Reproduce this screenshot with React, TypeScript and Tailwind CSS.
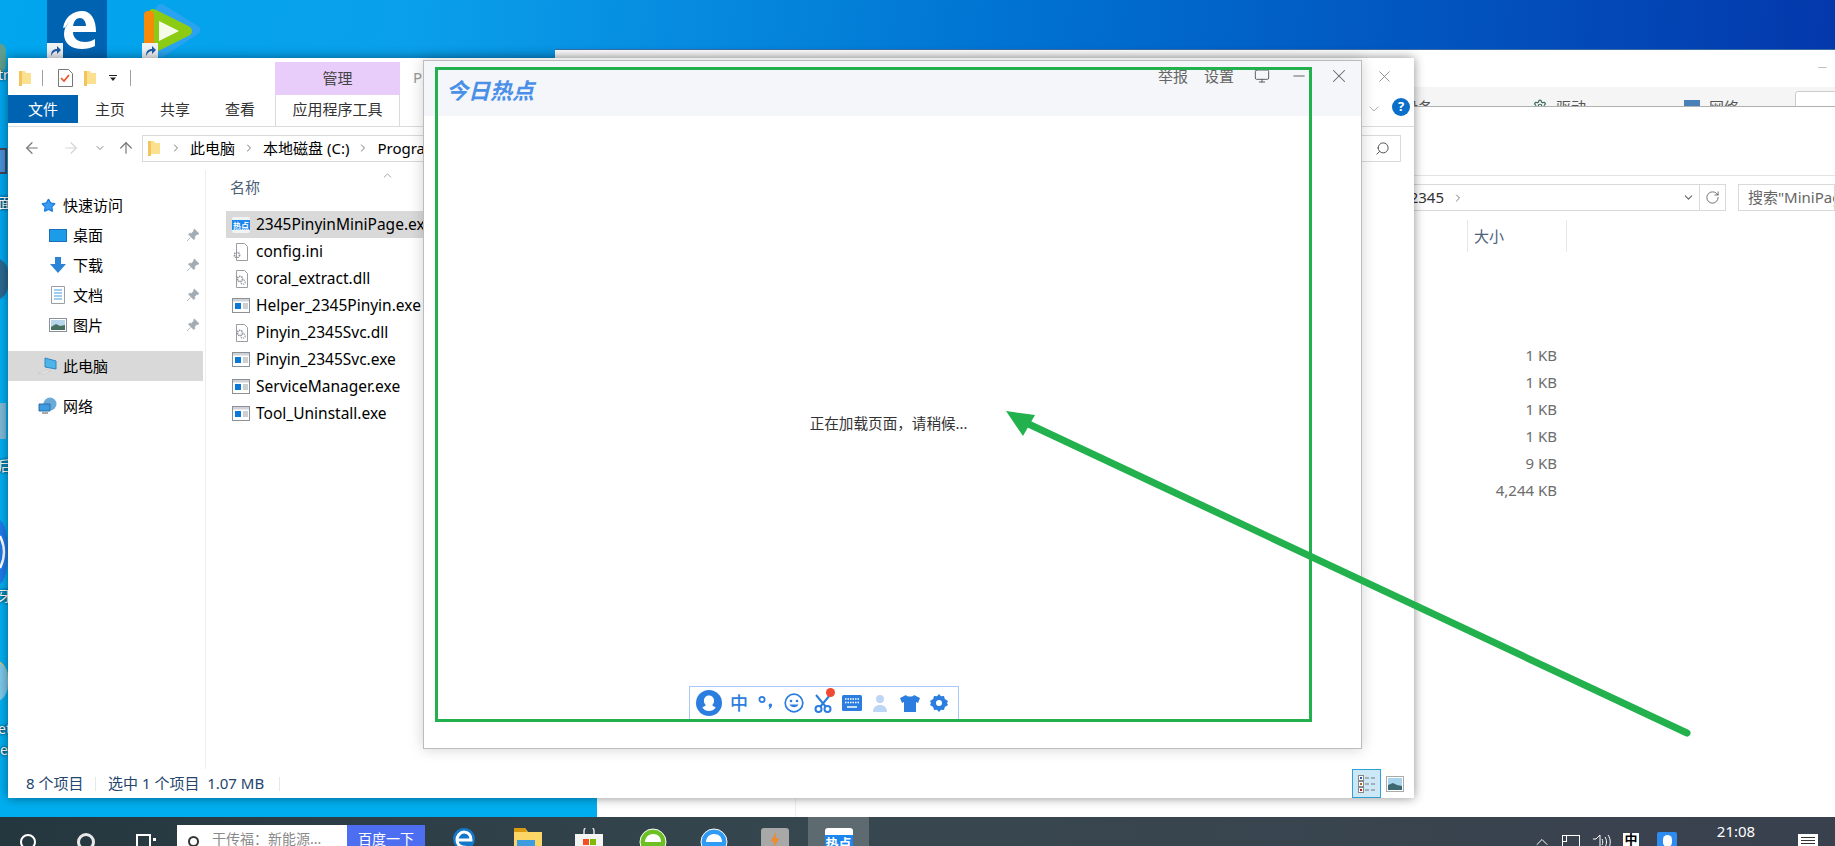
import { ArrowLeft, ArrowRight, ArrowUp, ChevronDown, ChevronRight, ChevronUp, Minus, Monitor, RotateCw, Search, Settings, Star, X } from 'lucide-react';

const FONT = "font-['Noto_Sans','Noto_Sans_CJK_SC',sans-serif]";

const FolderIcon = ({ className = '' }: { className?: string }) => (
    <svg viewBox="0 0 12 17" className={`w-[12px] h-[17px] shrink-0 ${className}`}>
        <path d="M0 1h6l1 2h5v11H2l-2 2z" fill="#fbe08f" />
        <path d="M0 1h3v15H0z" fill="#f2c55c" />
    </svg>
);

const ExeIcon = () => (
    <svg viewBox="0 0 18 15" className="w-[18px] h-[15px] shrink-0">
        <rect x="0.5" y="0.5" width="17" height="14" fill="#fff" stroke="#8b9097" />
        <rect x="1" y="1" width="16" height="2.5" fill="#cfd3d8" />
        <rect x="3" y="5" width="6" height="6" fill="#0a78d7" />
        <path d="M11 6h5M11 8h5M11 10h5" stroke="#9aa0a6" />
    </svg>
);

const PageIcon = ({ gear = false }: { gear?: boolean }) => (
    <svg viewBox="0 0 18 18" className="w-[18px] h-[18px] shrink-0">
        <path d="M4.5.5h8l3 3v14h-11z" fill="#fff" stroke="#9a9ea3" />
        <circle cx={gear ? 5 : 8} cy={gear ? 12 : 9} r="2.6" fill="none" stroke="#8a8f95" strokeWidth="1.6" strokeDasharray="1.4 .8" />
        {!gear && <circle cx="11" cy="12" r="2.2" fill="none" stroke="#a5a9ae" strokeWidth="1.4" strokeDasharray="1.2 .8" />}
    </svg>
);

const HotIcon = () => (
    <svg viewBox="0 0 18 16" className="w-[18px] h-[16px] shrink-0">
        <rect width="18" height="16" rx="2" fill="#f1f3f5" />
        <rect y="3" width="18" height="10" fill="#1a86ee" />
        <text x="9" y="11.5" textAnchor="middle" fontSize="8" fontWeight="700" fill="#fff" fontFamily="Noto Sans CJK SC">热点</text>
    </svg>
);

const Pin = () => (
    <svg viewBox="0 0 14 14" className="w-[14px] h-[14px] shrink-0">
        <path d="M8.3 1 13 5.7l-1.3.7-.7-.2L8.6 8.6l.2 2-1 1L2.5 6.2l1-1 2 .2 2.4-2.4-.2-.7z M4.5 9.4 1 13" fill="#a3abb3" stroke="#a3abb3" strokeWidth="0.8" />
    </svg>
);

const NavItem = ({ icon, label, pinned, active, indent }: { icon: React.ReactNode; label: string; pinned?: boolean; active?: boolean; indent?: boolean }) => (
    <div className={`flex items-center h-[30px] w-[195px] text-[15px] text-black ${active ? 'bg-[#d9d9d9]' : ''}`}>
        <div className={`flex items-center justify-center w-[20px] ${indent ? 'ml-[40px]' : 'ml-[30px]'}`}>{icon}</div>
        <span className="ml-[5px]">{label}</span>
        {pinned && <span className="ml-auto mr-[3px]"><Pin /></span>}
    </div>
);

const files: { name: string; icon: React.ReactNode; selected?: boolean }[] = [
    { name: '2345PinyinMiniPage.exe', icon: <HotIcon />, selected: true },
    { name: 'config.ini', icon: <PageIcon gear /> },
    { name: 'coral_extract.dll', icon: <PageIcon /> },
    { name: 'Helper_2345Pinyin.exe', icon: <ExeIcon /> },
    { name: 'Pinyin_2345Svc.dll', icon: <PageIcon /> },
    { name: 'Pinyin_2345Svc.exe', icon: <ExeIcon /> },
    { name: 'ServiceManager.exe', icon: <ExeIcon /> },
    { name: 'Tool_Uninstall.exe', icon: <ExeIcon /> },
];

const sizes = ['1 KB', '1 KB', '1 KB', '1 KB', '9 KB', '4,244 KB'];

function Explorer() {
    return (
        <div className="absolute left-[8px] top-[58px] w-[1406px] h-[740px] bg-white flex flex-col shadow-[0_0_10px_rgba(0,0,0,0.45)]">
            {/* title row */}
            <div className="flex h-[37px] shrink-0">
                <div className="flex items-center h-[37px] pt-[3px] pl-[11px]">
                    <FolderIcon />
                    <div className="w-px h-[16px] bg-[#a0a0a0] ml-[11px]" />
                    <svg viewBox="0 0 15 18" className="w-[15px] h-[18px] ml-[15px]">
                        <path d="M.5.5h10l4 4v13H.5z" fill="#fff" stroke="#777" />
                        <path d="M3 9l3 3 5-6" fill="none" stroke="#e8501e" strokeWidth="1.6" />
                    </svg>
                    <FolderIcon className="ml-[11px]" />
                    <svg viewBox="0 0 8 6" className="w-[8px] h-[6px] ml-[13px]"><path d="M0 0h8v1H0zM1 2.5h6L4 6z" fill="#222" /></svg>
                    <div className="w-px h-[16px] bg-[#a0a0a0] ml-[13px]" />
                </div>
                <div className="ml-[144px] mt-[4px] w-[125px] h-[33px] bg-[#e8ccfa] flex items-center justify-center text-[15px] text-[#444]">管理</div>
                <span className="ml-[13px] mt-[8px] text-[15px] text-[#999]">P</span>
                <X className="ml-auto mr-[20px] mt-[9px] text-[#777]" size={19} strokeWidth={1} />
            </div>
            {/* ribbon tabs */}
            <div className="flex h-[32px] shrink-0 border-b border-[#dadbdc] text-[15px] text-[#333]">
                <div className="w-[70px] h-[28px] bg-[#0063b1] text-white flex items-center justify-center">文件</div>
                <div className="flex h-[28px] items-center">
                    <span className="ml-[17px]">主页</span>
                    <span className="ml-[35px]">共享</span>
                    <span className="ml-[35px]">查看</span>
                </div>
                <div className="ml-[20px] w-[125px] h-[31px] pb-[3px] border-x border-[#dadbdc] flex items-center justify-center whitespace-nowrap">应用程序工具</div>
                <ChevronDown className="ml-auto mt-[6px] text-[#888]" size={16} strokeWidth={1} />
                <div className="ml-[10px] mr-[4px] mt-[3px] w-[18px] h-[18px] rounded-full bg-[#0a6fc9] text-white text-[13px] font-bold flex items-center justify-center">?</div>
            </div>
            {/* nav row */}
            <div className="flex items-center h-[43px] shrink-0 pb-[1px] pl-[15px] pr-[13px]">
                <ArrowLeft size={18} strokeWidth={1.6} className="text-[#777]" />
                <ArrowRight size={18} strokeWidth={1.6} className="ml-[21px] text-[#d5d5d5]" />
                <ChevronDown size={12} strokeWidth={2} className="ml-[14px] text-[#888]" />
                <ArrowUp size={18} strokeWidth={1.6} className="ml-[11px] text-[#777]" />
                <div className="flex items-center ml-[7px] w-[900px] h-[27px] border border-[#d9d9d9] text-[15px] text-black whitespace-nowrap overflow-hidden">
                    <FolderIcon className="ml-[5px]" />
                    <ChevronRight size={12} className="ml-[10px] text-[#777]" />
                    <span className="ml-[8px]">此电脑</span>
                    <ChevronRight size={12} className="ml-[8px] text-[#777]" />
                    <span className="ml-[8px]">本地磁盘 (C:)</span>
                    <ChevronRight size={12} className="ml-[8px] text-[#777]" />
                    <span className="ml-[8px]">Program Files (x86)</span>
                </div>
                <div className="flex items-center justify-end ml-auto w-[200px] h-[27px] border border-[#d9d9d9] pr-[10px]">
                    <Search size={15} strokeWidth={1.6} className="text-[#555] -scale-x-100" />
                </div>
            </div>
            {/* body */}
            <div className="flex flex-1 min-h-0">
                <div className="w-[198px] shrink-0 border-r border-[#eeeeee] pt-[20px]">
                    <NavItem icon={<Star size={15} className="text-[#1b7fe0] fill-[#3a9bf0]" />} label="快速访问" />
                    <NavItem indent pinned icon={<div className="w-[18px] h-[13px] bg-[#1c9be8] border border-[#1a6fb8]" />} label="桌面" />
                    <NavItem indent pinned icon={<svg viewBox="0 0 16 16" className="w-[16px] h-[16px]"><path d="M5 0h6v7h5l-8 9-8-9h5z" fill="#2b83d8" /></svg>} label="下载" />
                    <NavItem indent pinned icon={<svg viewBox="0 0 14 18" className="w-[14px] h-[18px]"><path d="M.5.5h13v17H.5z" fill="#fff" stroke="#9aa0a6" /><path d="M3 4h8M3 7h8M3 10h8M3 13h8" stroke="#3f9be0" /></svg>} label="文档" />
                    <NavItem indent pinned icon={<svg viewBox="0 0 18 14" className="w-[18px] h-[14px]"><rect x=".5" y=".5" width="17" height="13" fill="#fff" stroke="#8b9097" /><rect x="2" y="2" width="14" height="10" fill="#b7d6ea" /><path d="M2 9l5-3 4 2 5-1v5H2z" fill="#47705e" /></svg>} label="图片" />
                    <div className="h-[11px]" />
                    <NavItem active icon={<svg viewBox="0 0 20 18" className="w-[20px] h-[18px]"><path d="M7 1l11 3v8L7 10z" fill="#4db4ea" stroke="#2e86c0" /><path d="M0 16l10-3 3 1-8 3z" fill="#e6e6e6" stroke="#c0c0c0" strokeWidth=".5" /></svg>} label="此电脑" />
                    <div className="h-[10px]" />
                    <NavItem icon={<svg viewBox="0 0 20 18" className="w-[20px] h-[18px]"><circle cx="12" cy="7" r="6.5" fill="#6aa9d8" /><path d="M1 7h11v7H1z" fill="#3d9be0" stroke="#2d6fa8" /><path d="M4 16h6" stroke="#555" /></svg>} label="网络" />
                </div>
                <div className="flex-1 text-[15.5px] text-black">
                    <div className="flex items-start h-[41px] pl-[24px] pt-[6px] text-[15px] text-[#4c607a]">
                        <span>名称</span>
                        <ChevronUp size={13} strokeWidth={1.2} className="ml-[121px] -mt-[7px] text-[#777]" />
                    </div>
                    {files.map((f) => (
                        <div key={f.name} className={`flex items-center w-[1000px] h-[27px] ml-[20px] pl-[6px] ${f.selected ? 'bg-[#d9d9d9]' : ''}`}>
                            <div className="w-[18px] flex justify-center">{f.icon}</div>
                            <span className="ml-[6px]">{f.name}</span>
                        </div>
                    ))}
                </div>
            </div>
            {/* status bar */}
            <div className="flex items-center h-[29px] shrink-0 text-[15px] text-[#24456e]">
                <span className="ml-[18px] w-[69px] whitespace-nowrap">8 个项目</span>
                <div className="w-px h-[14px] bg-[#e8e8e8]" />
                <span className="ml-[12px] w-[171px] whitespace-nowrap">选中 1 个项目&nbsp; 1.07 MB</span>
                <div className="w-px h-[14px] bg-[#e8e8e8]" />
                <div className="ml-auto flex items-center justify-center w-[29px] h-[29px] bg-[#cce8f6] border border-[#2f9fd8]">
                    <svg viewBox="0 0 18 18" className="w-[18px] h-[18px]">
                        <rect x=".5" y=".5" width="5" height="5" fill="#fff" stroke="#888" /><rect x=".5" y="6.5" width="5" height="5" fill="#fff" stroke="#888" /><rect x=".5" y="12.5" width="5" height="5" fill="#fff" stroke="#888" />
                        <rect x="2" y="2" width="2" height="2" fill="#2a5aa8" /><rect x="2" y="8" width="2" height="2" fill="#a5702a" /><rect x="2" y="14" width="2" height="2" fill="#b82020" />
                        <path d="M7 3h4M13 3h4M7 9h4M13 9h4M7 15h4M13 15h4" stroke="#777" />
                    </svg>
                </div>
                <svg viewBox="0 0 18 16" className="w-[18px] h-[16px] ml-[5px] mr-[10px]"><rect x=".5" y=".5" width="17" height="15" fill="#fff" stroke="#aaa" /><rect x="2" y="2" width="14" height="12" fill="#a8d4ee" /><path d="M2 9l5-2 4 2 5 1v4H2z" fill="#3d6a70" /></svg>
            </div>
        </div>
    );
}

function BackWindow() {
    return (
        <>
            {/* lower window, only its bottom strip shows */}
            <div className="absolute left-[597px] top-[400px] w-[1238px] h-[417px] bg-white flex items-end">
                <div className="ml-[198px] w-px h-[19px] bg-[#eeeeee]" />
            </div>
            <div className="absolute left-[555px] top-[49px] w-[1280px] h-[749px] bg-white flex flex-col border-t border-[#3a6ea8]">
                <div className="flex justify-end h-[37px] shrink-0">
                    <Minus size={13} strokeWidth={1} className="mr-[6px] mt-[11px] text-[#888]" />
                </div>
                <div className="flex h-[20px] shrink-0 overflow-hidden bg-[#f5f5f5] border-b border-[#b0b0b0] pl-[848px] text-[15px] text-[#555] whitespace-nowrap">
                    <span className="pt-[9px]">设备</span>
                    <Settings size={14} className="ml-[100px] mt-[12px] shrink-0 text-[#3d6a5a]" />
                    <span className="ml-[9px] pt-[9px]">驱动</span>
                    <div className="ml-[98px] mt-[13px] w-[16px] h-[12px] bg-[#4a7fb8] shrink-0" />
                    <span className="ml-[9px] pt-[9px]">网络</span>
                    <div className="ml-[56px] mt-[4px] w-[60px] h-[20px] bg-white border border-[#cccccc] rounded-t-[3px] shrink-0" />
                </div>
                <div className="h-[69px] shrink-0 border-b border-[#e3e3e3]" />
                <div className="flex items-center h-[27px] mt-[8px] shrink-0 text-[15px] text-[#333]">
                    <div className="flex items-center justify-end ml-[700px] w-[471px] h-[27px] border border-[#d9d9d9]">
                        <span>2345</span>
                        <ChevronRight size={12} className="ml-[8px] mr-[218px] text-[#777]" />
                        <ChevronDown size={13} strokeWidth={2} className="mr-[4px] text-[#666]" />
                        <div className="w-px h-[25px] bg-[#d9d9d9]" />
                        <RotateCw size={15} strokeWidth={1.5} className="mx-[5px] text-[#666]" />
                    </div>
                    <div className="flex items-center ml-[12px] flex-1 h-[27px] border border-[#d9d9d9] pl-[9px] text-[#666] whitespace-nowrap overflow-hidden">搜索"MiniPage"</div>
                </div>
                <div className="flex items-center h-[32px] mt-[9px] shrink-0 ml-[912px] w-[100px] border-x border-[#e8e8e8] pl-[6px] text-[15px] text-[#4c607a]">大小</div>
                <div className="mt-[90px] w-[1002px] text-right text-[15px] text-[#6d6d6d]">
                    {sizes.map((s, i) => (
                        <div key={i} className="h-[27px] leading-[27px]">{s}</div>
                    ))}
                </div>
            </div>
        </>
    );
}

function Toolbar() {
    const c = '#2b7de0';
    return (
        <div className="relative flex items-center w-[270px] h-[34px] bg-white border border-[#a8c8f8] pl-[6px] gap-[8px]">
            <svg viewBox="0 0 26 26" className="w-[26px] h-[26px] shrink-0">
                <circle cx="13" cy="13" r="13" fill={c} />
                <path d="M13 5.5c3.4 0 5.2 2.6 5 5.7-.1 1.6-.8 2.9-1.7 3.8.2 1 1.8 1.6 3.4 2.4-1.6 2.3-4 3.6-6.7 3.6s-5.1-1.3-6.7-3.6c1.6-.8 3.2-1.4 3.4-2.4-.9-.9-1.6-2.2-1.7-3.8-.2-3.1 1.6-5.7 5-5.7z" fill="#fff" />
            </svg>
            <span className="w-[17px] shrink-0 text-[18px] leading-none font-medium text-[#2b7de0]">中</span>
            <svg viewBox="0 0 18 18" className="w-[18px] h-[18px] ml-[2px] shrink-0">
                <circle cx="5" cy="5.5" r="2.6" fill="none" stroke={c} strokeWidth="1.8" />
                <path d="M13.5 9.5c1.6 0 2 1.8 1 3.5-.6 1-1.5 2-3 2.7.6-1 1-1.8 1-2.8-1.5-.8-.8-3.4 1-3.4z" fill={c} />
            </svg>
            <svg viewBox="0 0 20 20" className="w-[20px] h-[20px] ml-[1px] shrink-0">
                <circle cx="10" cy="10" r="8.8" fill="none" stroke={c} strokeWidth="1.7" />
                <circle cx="7" cy="8" r="1.3" fill={c} /><circle cx="13" cy="8" r="1.3" fill={c} />
                <path d="M5.5 11.5c1.8 3.600 7.200 3.600 9 0z" fill={c} />
            </svg>
            <div className="relative w-[18px] h-[20px] ml-[2px] shrink-0">
                <svg viewBox="0 0 18 20" className="w-[18px] h-[20px]">
                    <path d="M2 2l10 12M16 2L6 14" stroke={c} strokeWidth="2" fill="none" />
                    <circle cx="4.5" cy="16" r="3" fill="none" stroke={c} strokeWidth="2" />
                    <circle cx="13.5" cy="16" r="3" fill="none" stroke={c} strokeWidth="2" />
                </svg>
                <div className="absolute -top-[5px] -right-[3px] w-[9px] h-[9px] rounded-full bg-[#f04a35]" />
            </div>
            <svg viewBox="0 0 20 16" className="w-[20px] h-[16px] ml-[2px] shrink-0">
                <rect width="20" height="16" rx="1.5" fill={c} />
                <path d="M3 4h14M3 7.5h14" stroke="#fff" strokeWidth="1.5" strokeDasharray="1.5 1" />
                <path d="M5 12h10" stroke="#fff" strokeWidth="1.5" />
            </svg>
            <svg viewBox="0 0 16 18" className="w-[16px] h-[18px] ml-[2px] shrink-0">
                <circle cx="8" cy="5" r="4" fill="#bdd6f6" /><path d="M1 18c0-5 3-7 7-7s7 2 7 7z" fill="#bdd6f6" />
            </svg>
            <svg viewBox="0 0 20 17" className="w-[20px] h-[17px] ml-[4px] shrink-0">
                <path d="M6 0c1 2 7 2 8 0l6 3-2 5-2-1v10H4V7L2 8 0 3z" fill={c} />
            </svg>
            <svg viewBox="0 0 18 18" className="w-[18px] h-[18px] ml-[2px] shrink-0">
                <path fillRule="evenodd" d="M9 0l2 2.2 3-.2.8 3L18 7l-1 2 1 2-3.2 2-.8 3-3-.2L9 18l-2-2.2-3 .2-.8-3L0 11l1-2-1-2 3.2-2 .8-3 3 .2zM9 6a3 3 0 100 6 3 3 0 000-6z" fill={c} />
            </svg>
        </div>
    );
}

function Popup() {
    return (
        <div className="absolute left-[423px] top-[60px] w-[939px] h-[689px] bg-white border border-[#bcbcbc] flex flex-col shadow-[0_0_14px_rgba(0,0,0,0.18)]">
            <div className="flex items-start h-[55px] shrink-0 bg-[#f5f6fa]">
                <span className="ml-[22px] mt-[13px] text-[22px] leading-[32px] font-bold italic text-[#4a90e8]">今日热点</span>
                <div className="ml-auto flex items-center h-[28px] mt-[1px] text-[15px] text-[#666]">
                    <span>举报</span>
                    <span className="ml-[16px]">设置</span>
                    <Monitor size={16} strokeWidth={1.4} className="ml-[20px] text-[#555]" />
                    <Minus size={18} strokeWidth={1.4} className="ml-[20px] text-[#666]" />
                    <X size={22} strokeWidth={1.1} className="ml-[20px] mr-[11px] text-[#666]" />
                </div>
            </div>
            <div className="flex flex-1 items-center justify-center pr-[8px] pt-[46px] text-[14.6px] text-[#333]">正在加载页面，请稍候...</div>
            <div className="flex pl-[265px] mb-[28px]">
                <Toolbar />
            </div>
        </div>
    );
}

function DesktopIcons() {
    return (
        <>
            <div className="absolute left-[47px] top-0 w-[60px] h-[58px] bg-[#0063b1] flex items-start justify-center pt-[10px] pl-[2px]">
                <svg viewBox="0 0 36 39" className="w-[36px] h-[39px]">
                    <path fillRule="evenodd" d="M3 18C5 6 14 1 22 1c9 0 14 8 14 21H13c0 7 6 10 12 10 4 0 7-1 10-3v7c-4 2-8 3-13 3-11 0-18-6-18-15 0-5 2-9 6-13-2 2-3 4-4 6zM13 16h13c0-5-3-8-6-8-4 0-6 3-7 8z" fill="#fff" />
                </svg>
            </div>
            <svg viewBox="0 0 58 56" className="absolute left-[143px] top-[3px] w-[58px] h-[56px]">
                <path d="M18 6L52 27L18 49Z" fill="#29a3f0" stroke="#29a3f0" strokeWidth="10" strokeLinejoin="round" />
                <path d="M10 11L44 28L10 45Z" fill="#8ccb14" stroke="#8ccb14" strokeWidth="10" strokeLinejoin="round" />
                <rect x="1" y="8" width="10" height="40" rx="4" fill="#f58a0b" />
                <path d="M16 18L36 28L16 38Z" fill="#f4fbe8" />
            </svg>
            {[47, 142].map((x) => (
                <svg key={x} viewBox="0 0 16 15" style={{ left: x, top: 43 }} className="absolute w-[16px] h-[15px]">
                    <rect width="16" height="15" fill="#eef1f4" />
                    <path d="M4 13c0-5 2-7 6-7V3l4 4-4 4V8c-2 0-4 1-6 5z" fill="#1e5aa8" />
                </svg>
            ))}
            <div className="absolute -left-[10px] top-[43px] w-[16px] h-[30px] rounded-full bg-[#5f9e8e]" />
            <div className="absolute -left-[12px] top-[148px] w-[19px] h-[26px] bg-[#4a90d9] border-2 border-[#445]" />
            <div className="absolute -left-[20px] top-[258px] w-[28px] h-[42px] rounded-full bg-[#2a6890]" />
            <div className="absolute -left-[14px] top-[403px] w-[20px] h-[36px] bg-[#7fb8d8]" />
            <svg viewBox="0 0 8 64" className="absolute left-0 top-[520px] w-[8px] h-[64px]">
                <path d="M0 0c5 4 8 14 8 32S5 60 0 64z" fill="#2079e8" />
                <path d="M0 16c3 6 4 10 4 16s-1 10-4 16" fill="none" stroke="#fff" strokeWidth="2.5" />
            </svg>
            <div className="absolute -left-[30px] top-[658px] w-[38px] h-[46px] rounded-full bg-[#7cc8e8] border-t-2 border-[#e8c060]" />
            {[['tr', 75], ['面', 203], ['后', 466], ['牙', 596], ['et', 729], ['e', 750]].map(([t, y]) => (
                <span key={String(y)} style={{ top: Number(y) - 9 }} className="absolute -left-[2px] text-[14px] leading-[18px] text-white [text-shadow:0_0_3px_#000] text-right w-[10px] overflow-hidden whitespace-nowrap">{t}</span>
            ))}
        </>
    );
}

function Taskbar() {
    return (
        <div className="absolute left-0 right-0 top-[817px] h-[29px] overflow-hidden bg-[linear-gradient(90deg,#24363e,#37474f_45%,#3a414e)] flex items-start">
            <div className="ml-[20px] mt-[17px] w-[16px] h-[16px] rounded-full border-2 border-white shrink-0" />
            <div className="ml-[41px] mt-[16px] w-[18px] h-[18px] rounded-full border-[3px] border-[#e8e8e8] shrink-0" />
            <div className="ml-[41px] mt-[17px] w-[15px] h-[14px] border-2 border-white shrink-0" />
            <div className="ml-[2px] mt-[21px] w-[3px] h-[3px] bg-white shrink-0" />
            <div className="ml-[21px] mt-[8px] flex w-[248px] h-[30px] text-[14px] shrink-0">
                <div className="flex items-start w-[170px] bg-white text-[#8a8a8a] pl-[11px] pt-[3px]">
                    <div className="mt-[8px] w-[11px] h-[11px] rounded-full border-2 border-[#333] shrink-0" />
                    <span className="ml-[13px] whitespace-nowrap">干传福：新能源...</span>
                </div>
                <div className="flex-1 bg-[#4e6ef2] text-white text-center pt-[3px]">百度一下</div>
            </div>
            <svg viewBox="0 0 24 24" className="ml-[27px] mt-[10px] w-[24px] h-[24px] shrink-0"><circle cx="12" cy="12" r="11" fill="#1477c9" /><path d="M5 13h14c0-5-3-8-7-8s-7 4-7 8c0 5 4 8 9 7" fill="none" stroke="#fff" strokeWidth="3" /></svg>
            <svg viewBox="0 0 28 26" className="ml-[38px] mt-[11px] w-[28px] h-[26px] shrink-0"><path d="M0 0h11l3 4h14v22H0z" fill="#fbd566" /><path d="M0 0h11l2 4H0z" fill="#d99a10" /><rect x="3" y="12" width="18" height="10" fill="#3d9be0" /></svg>
            <svg viewBox="0 0 28 26" className="ml-[33px] mt-[11px] w-[28px] h-[26px] shrink-0"><path d="M9 6V3a5 5 0 0110 0v3" fill="none" stroke="#ddd" strokeWidth="1.5" /><rect y="6" width="28" height="20" fill="#f4f4f4" /><rect x="8" y="11" width="6" height="6" fill="#f25022" /><rect x="15" y="11" width="6" height="6" fill="#7fba00" /></svg>
            <svg viewBox="0 0 28 28" className="ml-[36px] mt-[11px] w-[28px] h-[28px] shrink-0"><circle cx="14" cy="14" r="13" fill="#6cc024" stroke="#fff" /><path d="M6 14h16c0-5-3-8-8-8s-8 4-8 8" fill="#fff" /></svg>
            <svg viewBox="0 0 28 28" className="ml-[33px] mt-[11px] w-[28px] h-[28px] shrink-0"><circle cx="14" cy="14" r="13" fill="#2f9bf4" stroke="#fff" /><path d="M6 14h16c0-5-3-8-8-8s-8 4-8 8" fill="#fff" /></svg>
            <div className="ml-[33px] mt-[11px] w-[28px] h-[24px] rounded-[3px] bg-[#a8a8a8] flex items-center justify-center shrink-0"><div className="w-[9px] h-[16px] bg-[#f08a2a] [clip-path:polygon(60%_0,0_60%,45%_60%,30%_100%,100%_40%,55%_40%)]" /></div>
            <div className="ml-[19px] w-[61px] h-[29px] bg-[#5d6b70] flex justify-center pt-[11px] shrink-0">
                <div className="w-[28px] h-[26px] rounded-[3px] bg-white overflow-hidden pt-[7px]">
                    <div className="h-[20px] bg-[#1a86ee] text-white text-[13px] leading-[16px] font-bold text-center">热点</div>
                </div>
            </div>
            <ChevronUp size={20} strokeWidth={1.2} className="ml-auto mt-[15px] text-white shrink-0" />
            <div className="relative ml-[10px] mt-[18px] w-[18px] h-[16px] border border-white shrink-0">
                <div className="absolute -left-[1px] -top-[1px] w-[5px] h-[7px] border border-white bg-[#3a414e]" />
            </div>
            <svg viewBox="0 0 20 16" className="ml-[12px] mt-[17px] w-[20px] h-[16px] shrink-0"><path d="M1 5h3l4-4v15M10 5c1 2 1 4 0 6M13 3c2 3 2 7 0 10M16 1c3 4 3 10 0 14" fill="none" stroke="#fff" /></svg>
            <span className="ml-[11px] mt-[16px] w-[16px] h-[13px] bg-white text-black text-[13px] leading-[13px] text-center font-bold shrink-0">中</span>
            <div className="ml-[18px] mt-[15px] w-[20px] h-[20px] rounded-[2px] bg-[#2e8cf0] flex justify-center pt-[3px] shrink-0"><div className="w-[9px] h-[12px] rounded-full bg-white" /></div>
            <span className="ml-[38px] mt-[4px] w-[42px] text-[15px] leading-[20px] text-white text-center shrink-0">21:08</span>
            <div className="relative ml-[41px] mt-[17px] mr-[17px] w-[20px] h-[16px] bg-white shrink-0 flex flex-col gap-[2px] p-[3px]">
                <div className="h-px bg-[#333]" /><div className="h-px bg-[#333]" /><div className="h-px bg-[#333]" />
            </div>
        </div>
    );
}

export default function App() {
    return (
        <div className={`relative w-[1835px] h-[846px] overflow-hidden bg-[linear-gradient(95deg,#00a6ee_0%,#0a9fea_22%,#0070d0_55%,#0433a8_100%)] ${FONT}`}>
            <div className="absolute left-0 top-[300px] w-[600px] h-[520px] bg-[#00aef0]" />
            <DesktopIcons />
            <BackWindow />
            <Explorer />
            <Popup />
            <Taskbar />
            {/* annotation drawn on top of the screenshot */}
            <div className="absolute left-[435px] top-[67px] w-[877px] h-[655px] border-[3px] border-[#22b14c]" />
            <svg viewBox="0 0 1835 846" className="absolute inset-0 w-[1835px] h-[846px] pointer-events-none">
                <path d="M1687 733L1020 420" stroke="#22b14c" strokeWidth="7" strokeLinecap="round" />
                <path d="M1006 411l29 4-12 21z" fill="#22b14c" />
            </svg>
        </div>
    );
}
